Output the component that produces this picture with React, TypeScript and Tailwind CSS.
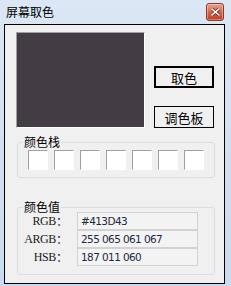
import React from 'react'

const swatches = [0, 1, 2, 3, 4, 5, 6]

const values = [
  { label: 'RGB', value: '#413D43' },
  { label: 'ARGB', value: '255 065 061 067' },
  { label: 'HSB', value: '187 011 060' },
]

const cjk = "font-['Microsoft_YaHei','Noto_Sans_CJK_SC',sans-serif]"

export default function App() {
  return (
    <div className="w-[231px] h-[286px] overflow-hidden bg-gradient-to-b from-[#dbe7f4] to-[#c9dbef] flex flex-col select-none">
      {/* Title bar */}
      <div className="h-[24px] flex items-start justify-between pl-[6px] pr-[7px] pt-[3px]">
        <span className={`${cjk} text-[12px] leading-[17px] text-black`}>屏幕取色</span>
        <div className="w-[18px] h-[18px] rounded-[3px] border border-[#8b3a2a] bg-gradient-to-b from-[#e9a38d] via-[#d5664a] to-[#c13a1e] flex items-center justify-center shadow-[inset_0_0_0_1px_rgba(255,255,255,0.35)]">
          <svg width="9" height="8" viewBox="0 0 9 8">
            <path d="M1 1 L8 7 M8 1 L1 7" stroke="#5a1d12" strokeWidth="3" strokeLinecap="square" />
            <path d="M1 1 L8 7 M8 1 L1 7" stroke="#ffffff" strokeWidth="1.6" strokeLinecap="square" />
          </svg>
        </div>
      </div>

      {/* Client area */}
      <div className="ml-[4px] w-[221px] h-[260px] border border-black bg-[#f0f0f0] flex flex-col">
        {/* Preview + buttons */}
        <div className="flex pl-[11px] pt-[7px]">
          <div className="w-[129px] h-[96px] border border-t-[#a0a0a0] border-l-[#a0a0a0] border-r-white border-b-white bg-[#413d43]" />
          <div className="ml-[9px] flex flex-col pt-[34px] gap-[18px]">
            <button className={`${cjk} w-[60px] h-[22px] border-2 border-black bg-[#f0f0f0] text-[13px] leading-none text-black`}>
              取色
            </button>
            <button className={`${cjk} w-[60px] h-[22px] border border-black bg-[#f0f0f0] text-[13px] leading-none text-black`}>
              调色板
            </button>
          </div>
        </div>

        {/* 颜色栈 */}
        <div className="relative ml-[12px] mt-[14px] w-[198px] h-[36px] rounded-[3px] border border-[#d5dfe5] flex items-start gap-[6px] pl-[10px] pt-[7px]">
          <span className={`${cjk} absolute -top-[9px] left-[5px] px-[1px] bg-[#f0f0f0] text-[12px] leading-[16px] text-black`}>颜色栈</span>
          {swatches.map((i) => (
            <div
              key={i}
              className="w-[20px] h-[20px] bg-white border border-t-[#a0a0a0] border-l-[#a0a0a0] border-r-white border-b-white"
            />
          ))}
        </div>

        {/* 颜色值 */}
        <div className="relative ml-[12px] mt-[29px] w-[198px] h-[68px] rounded-[3px] border border-[#d5dfe5] pt-[4px]">
          <span className={`${cjk} absolute -top-[9px] left-[5px] px-[1px] bg-[#f0f0f0] text-[12px] leading-[16px] text-black`}>颜色值</span>
          <div className="flex flex-col">
            {values.map((v) => (
              <div key={v.label} className="flex items-center h-[18px]">
                <span className="w-[50px] flex justify-end items-center text-[#1a1a1a]">
                  <span className="font-['Liberation_Serif',serif] font-normal text-[12px] leading-none tracking-[-0.4px]">{v.label}</span>
                  <span className={`${cjk} text-[12px] leading-none`}>：</span>
                </span>
                <div className="ml-[9px] w-[121px] h-[18px] border border-[#d2d2d2] bg-[#f3f3f3] flex items-center pl-[3px]">
                  <span className="font-['DejaVu_Sans',sans-serif] text-[10.5px] tracking-[-0.6px] leading-none text-[#1c2a3f]">
                    {v.value}
                  </span>
                </div>
              </div>
            ))}
          </div>
        </div>
      </div>
    </div>
  )
}
